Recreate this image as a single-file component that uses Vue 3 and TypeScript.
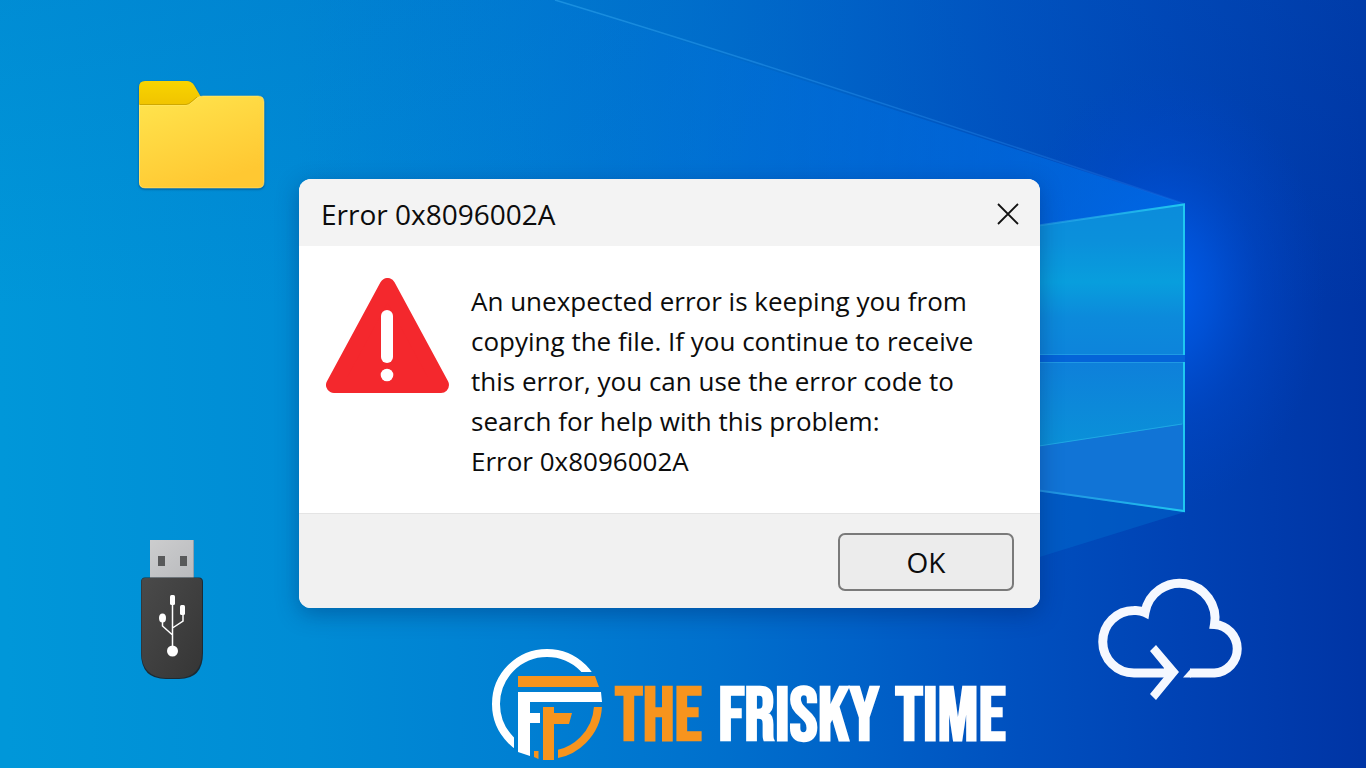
<script setup lang="ts">
import { ref } from 'vue'

const errorCode = 'Error 0x8096002A'
const open = ref(true)
const messageLines: string[] = [
  'An unexpected error is keeping you from',
  'copying the file. If you continue to receive',
  'this error, you can use the error code to',
  'search for help with this problem:',
  errorCode,
]

function close(): void {
  open.value = false
}
</script>

<template>
  <main class="desktop">
    <svg class="wallpaper" viewBox="0 0 1366 768" preserveAspectRatio="xMidYMid slice" aria-hidden="true">
      <defs>
        <linearGradient id="base" gradientUnits="userSpaceOnUse" x1="0" y1="400" x2="1366" y2="370">
          <stop offset="0" stop-color="#0097d9" />
          <stop offset="0.22" stop-color="#008cd5" />
          <stop offset="0.38" stop-color="#007fd2" />
          <stop offset="0.52" stop-color="#0070cd" />
          <stop offset="0.62" stop-color="#0062c8" />
          <stop offset="0.74" stop-color="#0050bf" />
          <stop offset="0.86" stop-color="#0042b4" />
          <stop offset="1" stop-color="#0034a4" />
        </linearGradient>
        <linearGradient id="shade" x1="0" y1="0" x2="0" y2="1">
          <stop offset="0" stop-color="#0060c0" stop-opacity="0.18" />
          <stop offset="0.4" stop-color="#0060c0" stop-opacity="0" />
          <stop offset="1" stop-color="#0060c0" stop-opacity="0" />
        </linearGradient>
        <radialGradient id="glow" gradientUnits="userSpaceOnUse" cx="0" cy="0" r="1" gradientTransform="translate(1165 290) scale(160 220)">
          <stop offset="0" stop-color="#005eee" />
          <stop offset="0.3" stop-color="#0056e0" stop-opacity="0.75" />
          <stop offset="0.6" stop-color="#004cd4" stop-opacity="0.35" />
          <stop offset="1" stop-color="#0044c8" stop-opacity="0" />
        </radialGradient>
        <linearGradient id="beam" gradientUnits="userSpaceOnUse" x1="300" y1="0" x2="1100" y2="180">
          <stop offset="0" stop-color="#0078ec" stop-opacity="0" />
          <stop offset="0.4" stop-color="#0078ec" stop-opacity="0.12" />
          <stop offset="1" stop-color="#0074ee" stop-opacity="0.6" />
        </linearGradient>
        <linearGradient id="beamEdge" gradientUnits="userSpaceOnUse" x1="555" y1="0" x2="1185" y2="204">
          <stop offset="0" stop-color="#2fa6ee" stop-opacity="0.55" />
          <stop offset="1" stop-color="#2f8cf4" stop-opacity="0.2" />
        </linearGradient>
        <linearGradient id="paneTop" x1="0" y1="0" x2="0" y2="1">
          <stop offset="0" stop-color="#0b8cdb" />
          <stop offset="0.25" stop-color="#0b90db" />
          <stop offset="0.52" stop-color="#089edd" />
          <stop offset="0.75" stop-color="#0c8adb" />
          <stop offset="1" stop-color="#0d84db" />
        </linearGradient>
        <linearGradient id="paneLow" x1="0" y1="0" x2="0" y2="1">
          <stop offset="0" stop-color="#0e80da" />
          <stop offset="1" stop-color="#0a92d8" />
        </linearGradient>
        <linearGradient id="rim" gradientUnits="userSpaceOnUse" x1="1040" y1="0" x2="1185" y2="0">
          <stop offset="0" stop-color="#2aa4e8" stop-opacity="0.6" />
          <stop offset="1" stop-color="#1fc8f0" />
        </linearGradient>
      </defs>
      <rect width="1366" height="768" fill="url(#base)" />
      <rect width="1366" height="768" fill="url(#shade)" />
      <rect width="1366" height="768" fill="url(#glow)" />
      <path d="M555 0 1185 204 1040 225H300V0Z" fill="url(#beam)" />
      <path d="M555 0Q800 74 1185 204" fill="none" stroke="url(#beamEdge)" stroke-width="1.500" />
      <path d="M1000 480 1185 512 1030 560Z" fill="#0068cc" opacity="0.5" />
      <path d="M1000 231 1185 204V355H1000Z" fill="url(#paneTop)" />
      <path d="M1000 355H1185V362H1000Z" fill="#0464d8" />
      <path d="M1000 362H1185V512L1000 486Z" fill="#1174d6" />
      <path d="M1000 362H1185V424L1000 452Z" fill="url(#paneLow)" />
      <path d="M1000 452 1182 424" stroke="#20a8e4" stroke-width="1" />
      <path d="M1000 354.500H1185M1000 362.500H1185" fill="none" stroke="#27a4e8" stroke-width="1" opacity="0.7" />
      <path d="M1000 231 1184 204.500V355M1184 362V511L1000 485" fill="none" stroke="url(#rim)" stroke-width="2" />
    </svg>

    <aside class="left">
      <svg class="folder" viewBox="19 21 126 108" role="img" aria-label="Folder">
        <defs>
          <linearGradient id="front" x1="0" y1="0" x2="0.45" y2="1">
            <stop offset="0" stop-color="#ffe54e" />
            <stop offset="1" stop-color="#ffc832" />
          </linearGradient>
          <linearGradient id="tab" x1="0" y1="0" x2="0" y2="1">
            <stop offset="0" stop-color="#f8d400" />
            <stop offset="1" stop-color="#efc000" />
          </linearGradient>
        </defs>
        <path d="M19 50V27Q19 21 25 21H67Q71 21 74 25L81 37 70 50Z" fill="url(#tab)" />
        <path d="M19 45H66Q69 45 71 43L77 38Q80 36 83 36H138Q144 36 144 42V122Q144 128 138 128H25Q19 128 19 122Z" fill="url(#front)" />
        <path d="M19.500 45H66Q69 45 71 43L77 38Q80 36 83 36H138Q144 36 144 42V122Q144 128 138 128H25Q19.500 128 19.500 122Z" fill="none" stroke="#ffef8a" stroke-width="1" opacity="0.55" />
        <path d="M20 44.500H66Q69 44 71 42L77 37" fill="none" stroke="#cfa800" stroke-width="1" />
      </svg>

      <svg class="usb" viewBox="21 20 62 139" role="img" aria-label="USB drive">
        <defs>
          <linearGradient id="metal" x1="0" y1="0" x2="1" y2="1">
            <stop offset="0" stop-color="#cccdce" />
            <stop offset="1" stop-color="#b9babd" />
          </linearGradient>
          <linearGradient id="body" x1="0" y1="0" x2="1" y2="1">
            <stop offset="0" stop-color="#4a4a4a" />
            <stop offset="1" stop-color="#353535" />
          </linearGradient>
        </defs>
        <rect x="30" y="20" width="44" height="39" fill="url(#metal)" />
        <path d="M73.500 20V58" stroke="#8f9fac" stroke-width="1" />
        <path d="M38 36h7v10h-7zM60 36h7v10h-7z" fill="#58595a" />
        <path d="M25 57.500H79Q83 57.500 83 62V133Q83 159 59 159H46Q21 159 21 133V62Q21 57.500 25 57.500Z" fill="#1c2a33" />
        <path d="M25 58H78Q82 58 82 62V133Q81 157 59 158H46Q22 157 21.500 133V62Q21.500 58 25 58Z" fill="url(#body)" />
        <g fill="none" stroke="#fff" stroke-width="1.500">
          <path d="M52.500 131V82M42.500 98V106L52.500 115M63 93V101L52.500 108" />
        </g>
        <g fill="#fff">
          <circle cx="52.500" cy="131" r="5.500" />
          <ellipse cx="42.500" cy="98" rx="3.500" ry="4.500" />
          <rect x="50" y="75" width="5" height="10" rx="1.500" />
          <rect x="60" y="85" width="5" height="10" rx="1.500" />
        </g>
      </svg>
    </aside>

    <section class="center">
      <div v-show="open" class="dialog" role="alertdialog" aria-labelledby="dialog-title" aria-describedby="dialog-text">
        <header class="titlebar">
          <h1 id="dialog-title">{{ errorCode }}</h1>
          <button class="close" type="button" aria-label="Close" @click="close">
            <svg viewBox="0 0 20 20" aria-hidden="true">
              <path d="M0 0 20 20M20 0 0 20" fill="none" stroke="#111" stroke-width="1.800" />
            </svg>
          </button>
        </header>
        <div class="content">
          <svg class="warning" viewBox="0 0 123 115" role="img" aria-label="Warning">
            <path d="M61.500 8 8 107H115Z" fill="#f4282d" stroke="#f4282d" stroke-width="16" stroke-linejoin="round" />
            <rect x="55" y="32" width="12" height="53" rx="6" fill="#fff" />
            <circle cx="61" cy="97" r="6.300" fill="#fff" />
          </svg>
          <p id="dialog-text" class="message">
            <span v-for="line in messageLines" :key="line">{{ line }}</span>
          </p>
        </div>
        <footer class="actions">
          <button class="ok" type="button" @click="close">OK</button>
        </footer>
      </div>

      <div class="brand">
        <svg class="emblem" viewBox="11 9 112 112" aria-hidden="true">
          <defs>
            <clipPath id="ringWhite"><path d="M0 0H113V33H34V130H0Z" /></clipPath>
            <clipPath id="ringOrange"><path d="M78 68H130V130H78Z" /></clipPath>
          </defs>
          <circle cx="67" cy="65" r="51" fill="none" stroke="#fff" stroke-width="8" clip-path="url(#ringWhite)" />
          <circle cx="67" cy="65" r="51" fill="none" stroke="#f7941d" stroke-width="8" clip-path="url(#ringOrange)" />
          <path d="M38 37H115L119 48H38ZM63 68H74V74H92L89 85H74V121H63ZM54 112H58.500V120L54 118Z" fill="#f7941d" />
          <path d="M38 53H121L122 63H50V74H60V84H50V117L38 113Z" fill="#fff" />
        </svg>
        <span class="name"><span class="accent">THE</span><span>FRISKY</span><span>TIME</span></span>
      </div>
    </section>

    <aside class="right">
      <svg class="cloud" viewBox="20 19 143 122" role="img" aria-label="Cloud transfer">
        <path d="M88 113H54A31 31 0 0 1 54 50.500Q60 50 65 52.500A35 35 0 1 1 134.500 64.500A24.300 24.300 0 0 1 134.500 113H110" fill="none" stroke="#f5f8ff" stroke-width="9" />
        <path d="M103 117.500 111 108.500V117.500Z" fill="#f5f8ff" />
        <path d="M76 85 99 112 76 140 70 134 84 117V108L70 91Z" fill="#f5f8ff" />
      </svg>
    </aside>
  </main>
</template>

<style>
body {
  margin: 0;
}
</style>

<style scoped>
.desktop {
  position: relative;
  box-sizing: border-box;
  display: grid;
  grid-template-columns: 299px minmax(0, 1fr) 326px;
  min-height: 100vh;
  overflow: hidden;
  background: #0070d0;
  color: #0c0c0c;
  font-family: "Open Sans", "Noto Sans", sans-serif;
}

.wallpaper {
  position: absolute;
  inset: 0;
  width: 100%;
  height: 100%;
}

.left,
.center,
.right {
  position: relative;
  box-sizing: border-box;
  display: flex;
  flex-direction: column;
}

.left {
  justify-content: space-between;
  padding: 81px 0 89px 139px;
}

.folder {
  width: 126px;
  height: 108px;
  overflow: visible;
  filter: drop-shadow(0 1px 1px rgba(0, 40, 90, 0.6));
}

.usb {
  width: 62px;
  height: 139px;
  margin-left: 2px;
  overflow: visible;
}

.center {
  gap: 40px;
  padding-top: 179px;
}

.dialog {
  overflow: hidden;
  border-radius: 12px;
  background: #fff;
  box-shadow: 0 6px 22px rgba(0, 30, 90, 0.35);
}

.titlebar {
  box-sizing: border-box;
  display: flex;
  align-items: center;
  justify-content: space-between;
  height: 67px;
  padding: 2px 22px 0;
  background: #f3f3f3;
}

h1 {
  margin: 0;
  font-size: 28px;
  font-weight: 400;
  line-height: 40px;
}

.close {
  display: flex;
  padding: 0;
  border: 0;
  background: none;
  cursor: pointer;
}

.close svg {
  width: 20px;
  height: 20px;
  overflow: visible;
}

.content {
  display: flex;
  align-items: flex-start;
  gap: 22px;
  padding: 32px 27px;
}

.warning {
  flex: none;
  width: 123px;
  height: 115px;
}

.message {
  margin: 3px 0 0;
  font-size: 26px;
  line-height: 40px;
  white-space: nowrap;
}

.message span {
  display: block;
}

.actions {
  display: flex;
  justify-content: flex-end;
  padding: 19px 26px 17px;
  border-top: 1px solid #e4e4e4;
  background: #f1f1f1;
}

.ok {
  width: 176px;
  height: 58px;
  padding: 0;
  border: 2px solid #7a7a7a;
  border-radius: 7px;
  background: #ececec;
  color: inherit;
  font: inherit;
  font-size: 28px;
  cursor: pointer;
}

.brand {
  display: flex;
  align-items: center;
  gap: 12px;
  padding-left: 192px;
}

.emblem {
  flex: none;
  width: 112px;
  height: 112px;
}

.name {
  display: flex;
  gap: 16px;
  padding-top: 28px;
  color: #fff;
  font-family: "Bebas Neue", Oswald, "Roboto Condensed", "Open Sans Condensed", "Liberation Sans Narrow", "Liberation Sans", sans-serif;
  font-size: 76px;
  font-weight: 700;
  line-height: 80px;
  white-space: nowrap;
}

.accent {
  color: #f7941d;
}

.right {
  align-items: flex-start;
  justify-content: flex-end;
  padding: 0 0 67px 60px;
}

.cloud {
  width: 143px;
  height: 122px;
  overflow: visible;
}
</style>
